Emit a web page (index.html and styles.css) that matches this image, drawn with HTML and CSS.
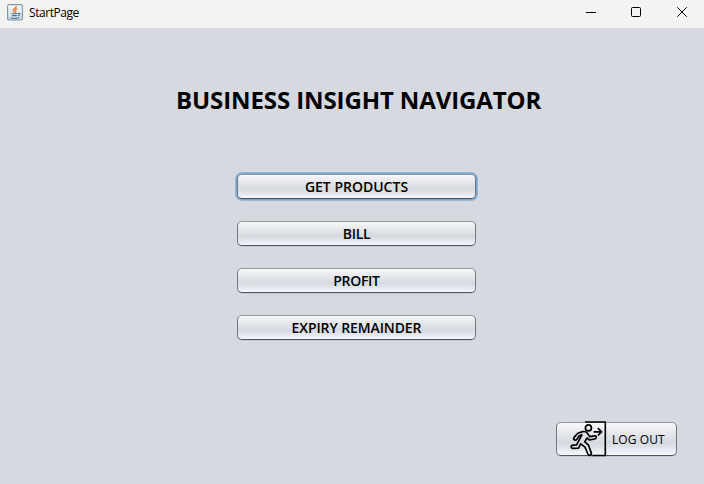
FILE: index.html
```html
<!DOCTYPE html>
<html lang="en">
<head>
<meta charset="utf-8">
<title>StartPage</title>
<link rel="stylesheet" href="styles.css">
</head>
<body>
<div class="window">
  <header class="titlebar">
    <svg class="app-icon" width="16" height="17" viewBox="0 0 16 17">
      <defs><linearGradient id="tile" x1="0" y1="0" x2="0" y2="1"><stop offset="0" stop-color="#fdfdfd"/><stop offset="1" stop-color="#c9d6e0"/></linearGradient></defs>
      <rect x=".6" y=".6" width="14.8" height="15.4" rx="1.5" fill="url(#tile)" stroke="#7d94a6" stroke-width="1.1"/>
      <path d="M9.4 2.2C9.8 4 5.6 4.7 6.2 6.5C6.4 7.3 7.3 7.7 7.3 8.7M10.2 4.6C8.2 5.5 8 6.3 8.6 7.1C9 7.8 8.7 8.3 8.2 8.8" fill="none" stroke="#e8833a" stroke-width="1.4"/>
      <path d="M4.5 9.7H10.6M5.2 11.6H9.8M3.6 13.7C6 14.5 10 14.5 12.2 13.5M11 9.5C13.5 8.9 13.3 11.2 10.9 11.7" fill="none" stroke="#48708f" stroke-width="1.1"/>
    </svg>
    <span class="caption">StartPage</span>
    <div class="controls">
      <svg width="10" height="10" viewBox="0 0 10 10"><path d="M0 5.5H10"/></svg>
      <svg width="10" height="10" viewBox="0 0 10 10"><rect x=".5" y=".5" width="9" height="9" rx="1"/></svg>
      <svg width="10" height="10" viewBox="0 0 10 10"><path d="M.3 .3L9.7 9.7M9.7 .3L.3 9.7"/></svg>
    </div>
  </header>
  <main class="content">
    <h1 class="heading">BUSINESS INSIGHT NAVIGATOR</h1>
    <nav class="menu">
      <button class="btn btn-focus"><span class="t-products">GET PRODUCTS</span></button>
      <button class="btn"><span class="t-bill">BILL</span></button>
      <button class="btn"><span class="t-profit">PROFIT</span></button>
      <button class="btn"><span class="t-expiry">EXPIRY REMAINDER</span></button>
    </nav>
    <button class="btn logout">
      <svg class="exit" width="37" height="36" viewBox="0 0 37 36">
        <path class="door" d="M15 1H35.3V34.5H22.5"/>
        <circle cx="18.4" cy="6.9" r="3"/>
        <path d="M24.3 10.8H31.3M28.4 7.6L31.6 10.8L28.4 14"/>
        <path d="M7.8 12.2L12.8 10.6C15 10.2 17.1 11.2 18.1 13.1L19.8 15.7L24.4 14.8C26.6 14.4 27 17.4 25 17.9L19.5 19L17.1 17L14.8 20.8L18.5 24.2L21.2 31.6C22 34 19 35.4 17.9 33L15 26.2L10.7 22.9L8.6 27.2L3 27.4C.6 27.4 .6 24.3 3 24.2L6.6 23.8L11.9 13.9L9.3 14.8L6.9 18.2C5.2 20.2 2.8 18.3 4.1 16.4Z"/>
      </svg>
      <span class="t-logout">LOG OUT</span>
    </button>
  </main>
</div>
</body>
</html>
```
FILE: styles.css
```css
* { box-sizing: border-box; }
body { margin: 0; background: #d6d9df; color: #000; font-family: "Open Sans", "Noto Sans", sans-serif; }
.window { width: 704px; height: 484px; display: flex; flex-direction: column; overflow: hidden; }
.titlebar { height: 28px; flex: none; display: flex; align-items: center; background: #f3f3f1; padding: 0 17px 4px 7px; }
.app-icon { flex: none; }
.caption { margin-left: 6px; font-size: 12px; line-height: 16px; letter-spacing: -.45px; padding-top: 1px; }
.controls { margin-left: auto; display: flex; gap: 35px; }
.controls svg { fill: none; stroke: #000; stroke-width: 1; }
.controls svg:not(:last-child) { position: relative; left: -1px; }
.content { flex: 1; display: flex; flex-direction: column; padding-top: 55px; }
.heading { margin: 0 0 0 176px; font-size: 24px; line-height: 33px; font-weight: 700; letter-spacing: -.1px; white-space: nowrap; }
.menu { margin: 58px 0 0 237px; width: 239px; display: flex; flex-direction: column; gap: 22px; }
.btn {
  height: 25px; padding: 0; display: flex; align-items: center; justify-content: center;
  font: 550 14px/18px "Open Sans", "Noto Sans", sans-serif; color: #000; white-space: nowrap;
  border: 1px solid #73767b; border-top-color: #96999e; border-bottom-color: #515459; border-radius: 5px;
  background: linear-gradient(#f8f8fa 0%, #e6e8ec 30%, #d6d9df 62%, #e1e4e9 78%, #f4f7fd 100%);
  box-shadow: 0 1px 0 #c5c8ce;
}
.btn-focus { box-shadow: 0 0 0 1px #73a4d1, 0 0 0 2px #93b6da; }
.t-products { letter-spacing: 0; }
.t-bill, .t-profit { letter-spacing: -.3px; }
.t-expiry { letter-spacing: -.1px; }
.logout { width: 121px; height: 34px; margin: 82px 0 0 556px; padding-left: 13px; justify-content: flex-start; font-size: 12px; font-weight: 400; }
.exit { flex: none; margin-top: -1px; fill: none; stroke: #000; stroke-width: 1.7; stroke-linejoin: round; stroke-linecap: round; }
.exit .door { stroke-linejoin: miter; stroke-linecap: butt; stroke-width: 1.6; }
.t-logout { margin-left: 5px; padding-top: 2px; letter-spacing: .08px; }
```
